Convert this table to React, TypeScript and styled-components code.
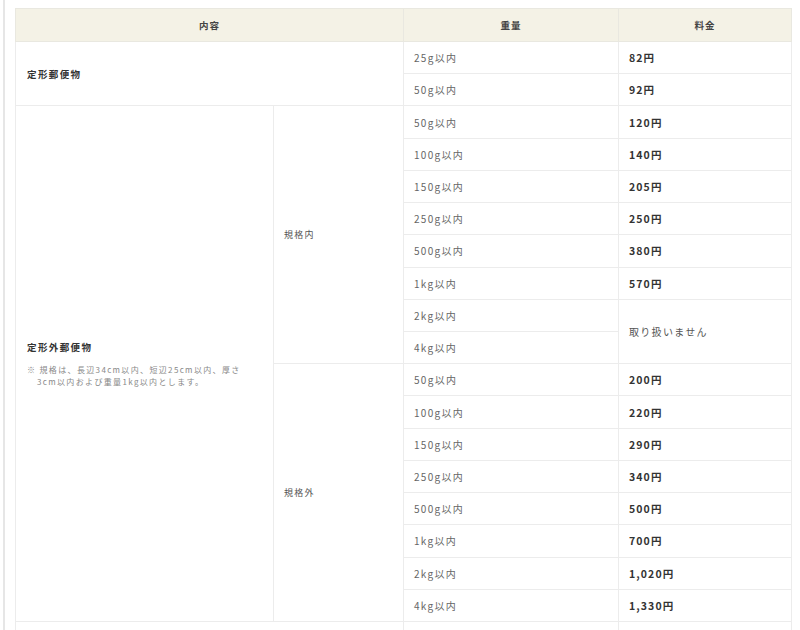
import React from "react";
import styled, { createGlobalStyle } from "styled-components";

const Global = createGlobalStyle`
  html, body { margin: 0; padding: 0; background: #fff; }
  body { font-family: "Noto Sans CJK JP", "Noto Sans", sans-serif; }
`;

const Frame = styled.div`
  margin-left: 3px;
  border-left: 2px solid #e6e6e6;
  padding: 8px 9px 0 10px;
  height: 630px;
  box-sizing: border-box;
  overflow: hidden;
`;

const Table = styled.table`
  width: 776px;
  border-collapse: collapse;
  table-layout: fixed;
  border: 1px solid #ebebe8;
`;

const Th = styled.th`
  background: #f4f2e6;
  height: 32px;
  padding: 0;
  font-size: 9.5px;
  font-weight: bold;
  color: #444;
  letter-spacing: 1px;
  text-align: center;
  border: 1px solid #e9e8e0;
`;

const Td = styled.td`
  border: 1px solid #ececec;
  height: 31.22px;
  padding: 0 10px;
  vertical-align: middle;
  font-size: 10px;
  letter-spacing: 1.3px;
  color: #666;
`;

const LabelCell = styled(Td)`
  padding-left: 11px;
`;

const Label = styled.div`
  font-size: 9.5px;
  font-weight: bold;
  color: #333;
  letter-spacing: 1.4px;
`;

const Note = styled.div`
  margin-top: 10px;
  font-size: 8px;
  line-height: 12px;
  color: #888;
  letter-spacing: 1.35px;
  padding-left: 10px;
  text-indent: -10px;
  width: 240px;
`;

const SubCell = styled(Td)`
  font-size: 9px;
  color: #555;
`;

const Price = styled(Td)`
  font-weight: 600;
  color: #333;
  font-size: 10.5px;
  letter-spacing: 1.1px;
`;

const NoPrice = styled(Td)`
  color: #555;
  font-size: 10px;
`;

type Row = { w: string; p: string | null };

const inside: Row[] = [
  { w: "50g以内", p: "120円" },
  { w: "100g以内", p: "140円" },
  { w: "150g以内", p: "205円" },
  { w: "250g以内", p: "250円" },
  { w: "500g以内", p: "380円" },
  { w: "1kg以内", p: "570円" },
  { w: "2kg以内", p: "取り扱いません" },
  { w: "4kg以内", p: null },
];

const outside: Row[] = [
  { w: "50g以内", p: "200円" },
  { w: "100g以内", p: "220円" },
  { w: "150g以内", p: "290円" },
  { w: "250g以内", p: "340円" },
  { w: "500g以内", p: "500円" },
  { w: "1kg以内", p: "700円" },
  { w: "2kg以内", p: "1,020円" },
  { w: "4kg以内", p: "1,330円" },
];

export default function App() {
  return (
    <>
      <Global />
      <Frame>
        <Table>
          <colgroup>
            <col style={{ width: 258 }} />
            <col style={{ width: 130 }} />
            <col style={{ width: 215 }} />
            <col style={{ width: 173 }} />
          </colgroup>
          <thead>
            <tr>
              <Th colSpan={2}>内容</Th>
              <Th>重量</Th>
              <Th>料金</Th>
            </tr>
          </thead>
          <tbody>
            <tr>
              <LabelCell colSpan={2} rowSpan={2}>
                <Label>定形郵便物</Label>
              </LabelCell>
              <Td>25g以内</Td>
              <Price>82円</Price>
            </tr>
            <tr>
              <Td>50g以内</Td>
              <Price>92円</Price>
            </tr>
            {inside.map((r, i) => (
              <tr key={"in" + i}>
                {i === 0 && (
                  <LabelCell rowSpan={16}>
                    <Label>定形外郵便物</Label>
                    <Note>
                      ※ 規格は、長辺34cm以内、短辺25cm以内、厚さ
                      <br />
                      3cm以内および重量1kg以内とします。
                    </Note>
                  </LabelCell>
                )}
                {i === 0 && <SubCell rowSpan={8}>規格内</SubCell>}
                <Td>{r.w}</Td>
                {r.p === "取り扱いません" ? (
                  <NoPrice rowSpan={2}>{r.p}</NoPrice>
                ) : r.p === null ? null : (
                  <Price>{r.p}</Price>
                )}
              </tr>
            ))}
            {outside.map((r, i) => (
              <tr key={"out" + i}>
                {i === 0 && <SubCell rowSpan={8}>規格外</SubCell>}
                <Td>{r.w}</Td>
                <Price>{r.p}</Price>
              </tr>
            ))}
            <tr>
              <Td colSpan={2} />
              <Td />
              <Td />
            </tr>
          </tbody>
        </Table>
      </Frame>
    </>
  );
}
